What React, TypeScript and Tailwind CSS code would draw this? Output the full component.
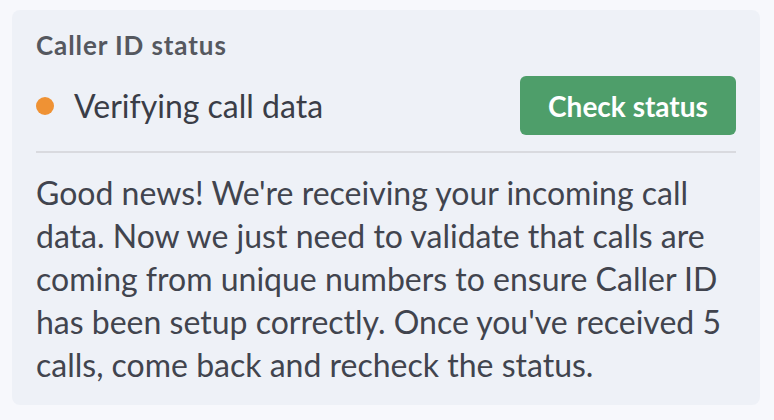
import { useState } from 'react';

const CallerIdStatus = () => {
  const [checking, setChecking] = useState(false);

  return (
    <div className="min-h-screen w-full bg-[#f7f8fc] pl-3 pr-[14px] py-[10px] font-['Lato',sans-serif]">
      <section className="rounded-lg bg-[#eef1f7] px-6 pt-[20px] pb-[19px]">
        {/* Header */}
        <h2 className="text-[26px] font-bold leading-[31px] tracking-[0.9px] text-[#55585f]">Caller ID status</h2>

        {/* Status row */}
        <div className="mt-[15px] flex items-center justify-between">
          <div className="flex items-center gap-[20px]">
            <span className="h-[18px] w-[18px] rounded-full bg-[#ef9234]" />
            <span className="text-[32px] leading-[38px] text-[#3a3d47]">Verifying call data</span>
          </div>
          <button
            onClick={() => setChecking(!checking)}
            className="h-[59px] w-[216px] rounded-md bg-[#4e9e6a] text-[28px] font-bold text-white"
          >
            Check status
          </button>
        </div>

        <div className="mt-[16px] h-[2px] bg-[#d9dadf]" />

        {/* Description */}
        <p className="mt-[18px] text-[32px] leading-[43px] text-[#41444e]">
          Good news! We're receiving your incoming call data. Now we just need to validate that calls are
          coming from unique numbers to ensure Caller ID has been setup correctly. Once you've received 5
          calls, come back and recheck the status.
        </p>
      </section>
    </div>
  );
};

export default function App() {
  return <CallerIdStatus />;
}
